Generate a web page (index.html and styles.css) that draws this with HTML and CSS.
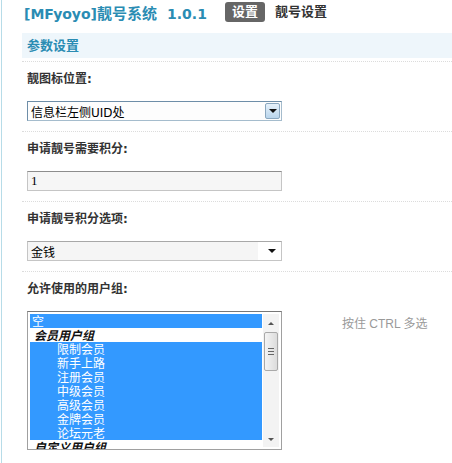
FILE: index.html
```html
<!DOCTYPE html>
<html lang="zh-CN">
<head>
  <meta charset="UTF-8" />
  <title>[MFyoyo]靓号系统 - 设置</title>
  <link rel="stylesheet" href="styles.css">
</head>
<body>
  <div class="frame">
    <div class="topbar">
      <span class="app-title">[MFyoyo]<span class="cjk">靓号系统</span><span class="ver">1.0.1</span></span>
      <a class="tab current" href="#">设置</a>
      <a class="tab" href="#">靓号设置</a>
    </div>

    <div class="section-head">参数设置</div>

    <div class="row">
      <div class="label">靓图标位置:</div>
      <div class="select win">
        <span class="value">信息栏左侧UID处</span>
        <span class="drop-btn"><span class="arrow"></span></span>
      </div>
    </div>

    <div class="row">
      <div class="label">申请靓号需要积分:</div>
      <div class="textbox">1</div>
    </div>

    <div class="row">
      <div class="label">申请靓号积分选项:</div>
      <div class="select plain">
        <span class="value">金钱</span>
        <span class="drop-btn"><span class="arrow"></span></span>
      </div>
    </div>

    <div class="row last">
      <div class="label">允许使用的用户组:</div>
      <div class="list-line">
        <div class="listbox">
          <div class="options">
            <div class="opt sel">空</div>
            <div class="group">会员用户组</div>
            <div class="opt sel sub">限制会员</div>
            <div class="opt sel sub">新手上路</div>
            <div class="opt sel sub">注册会员</div>
            <div class="opt sel sub">中级会员</div>
            <div class="opt sel sub">高级会员</div>
            <div class="opt sel sub">金牌会员</div>
            <div class="opt sel sub">论坛元老</div>
            <div class="group">自定义用户组</div>
          </div>
          <div class="scrollbar">
            <span class="sb-up"></span>
            <span class="sb-thumb"><span class="grip"></span></span>
            <span class="sb-down"></span>
          </div>
        </div>
        <span class="hint">按住 CTRL 多选</span>
      </div>
    </div>
  </div>
</body>
</html>
```

FILE: styles.css
```css
body {
  margin: 0;
  padding-left: 1px;
  background: #fff;
  font-family: "DejaVu Sans", "Noto Sans CJK SC", sans-serif;
  font-size: 12px;
  color: #333;
}
.frame {
  border-left: 1px solid #b7dce8;
  min-height: 463px;
  padding-left: 20px;
  overflow: hidden;
}
.topbar {
  height: 33px;
  display: flex;
  align-items: flex-start;
  padding-top: 2px;
  box-sizing: border-box;
}
.app-title {
  font-size: 14px;
  font-weight: bold;
  color: #2a8cb3;
  margin-left: 2px;
  line-height: 20px;
  margin-top: 2px;
  width: 201px;
  white-space: nowrap;
}
.app-title .cjk {
  font-size: 15px;
}
.app-title .ver {
  margin-left: 10px;
}
.tab {
  font-weight: bold;
  font-size: 13px;
  color: #333;
  text-decoration: none;
  line-height: 20px;
  padding: 0 7px;
  margin-right: 3px;
}
.tab.current {
  background: #666;
  color: #fff;
  border-radius: 3px;
}
.section-head {
  background: #eef6fb;
  height: 25px;
  line-height: 25px;
  padding-left: 5px;
  font-size: 13px;
  font-weight: bold;
  color: #2a8cb3;
  margin-bottom: 3px;
}
.row {
  padding: 8px 0 10px 5px;
  border-top: 1px dotted #dcdcdc;
}
.label {
  font-weight: bold;
  font-size: 12px;
  color: #333;
  line-height: 18px;
  margin-bottom: 13px;
}
.select,
.textbox {
  width: 255px;
  height: 20px;
  box-sizing: border-box;
  display: flex;
  align-items: center;
  font-size: 12px;
  color: #000;
}
.select .value {
  flex: 1;
  padding-left: 3px;
}
.select.win {
  border: 1px solid #7f9db9;
  border-color: #6e8ea8 #a5bccd #a5bccd #6e8ea8;
  background: #fdfdfd;
}
.select.win .drop-btn {
  width: 15px;
  height: 16px;
  margin-right: 1px;
  border: 1px solid #8aa7bf;
  border-radius: 2px;
  box-sizing: border-box;
  background: linear-gradient(#e6f1fa, #b9d5ec);
  display: flex;
  align-items: center;
  justify-content: center;
}
.select.plain {
  border: 1px solid #c5c5c5;
  border-top-color: #a8a8a8;
  background: linear-gradient(90deg, #f5f5f5 0, #f5f5f5 230px, #fff 230px);
}
.select.plain .drop-btn {
  width: 18px;
  display: flex;
  justify-content: center;
}
.arrow {
  width: 0;
  height: 0;
  border-left: 4px solid transparent;
  border-right: 4px solid transparent;
  border-top: 4px solid #111;
}
.textbox {
  margin-top: 2px;
  border: 1px solid #c5c5c5;
  border-top-color: #8d8d8d;
  background: #f6f6f6;
  padding-left: 3px;
  font-family: "Liberation Serif", serif;
  font-size: 13px;
}
.list-line {
  display: flex;
  align-items: flex-start;
}
.listbox {
  width: 255px;
  height: 139px;
  box-sizing: border-box;
  border: 1px solid #a0a0a0;
  border-top-color: #777;
  display: flex;
  padding: 2px;
  overflow: hidden;
  background: #fff;
}
.options {
  flex: 1;
  font-family: "Noto Sans CJK SC", sans-serif;
}
.opt,
.group {
  height: 14px;
  line-height: 14px;
  font-size: 12px;
  white-space: nowrap;
}
.opt {
  padding-left: 2px;
}
.opt.sel {
  background: #3399ff;
  color: #fff;
}
.opt.sub {
  padding-left: 27px;
}
.group {
  font-weight: bold;
  font-style: italic;
  color: #111;
  padding-left: 4px;
}
.scrollbar {
  width: 16px;
  margin-left: 1px;
  background: #f3f3f3;
  display: flex;
  flex-direction: column;
  align-items: center;
}
.sb-up,
.sb-down {
  width: 0;
  height: 0;
  border-left: 3px solid transparent;
  border-right: 3px solid transparent;
}
.sb-up {
  border-bottom: 3px solid #555;
  margin: 8px 0 7px;
}
.sb-down {
  border-top: 3px solid #555;
  margin-top: auto;
  margin-bottom: 6px;
}
.sb-thumb {
  width: 14px;
  height: 39px;
  box-sizing: border-box;
  border: 1px solid #a9a9a9;
  border-radius: 2px;
  background: linear-gradient(90deg, #f4f4f4, #dcdcdc);
  display: flex;
  align-items: center;
  justify-content: center;
}
.grip {
  width: 6px;
  height: 5px;
  border-top: 1px solid #666;
  border-bottom: 1px solid #666;
  position: relative;
}
.grip::after {
  content: "";
  position: absolute;
  left: 0;
  right: 0;
  top: 2px;
  border-top: 1px solid #666;
}
.hint {
  margin-left: 60px;
  margin-top: 3px;
  color: #999;
  font-size: 12px;
  font-family: "Liberation Sans", "Noto Sans CJK SC", sans-serif;
}
```
